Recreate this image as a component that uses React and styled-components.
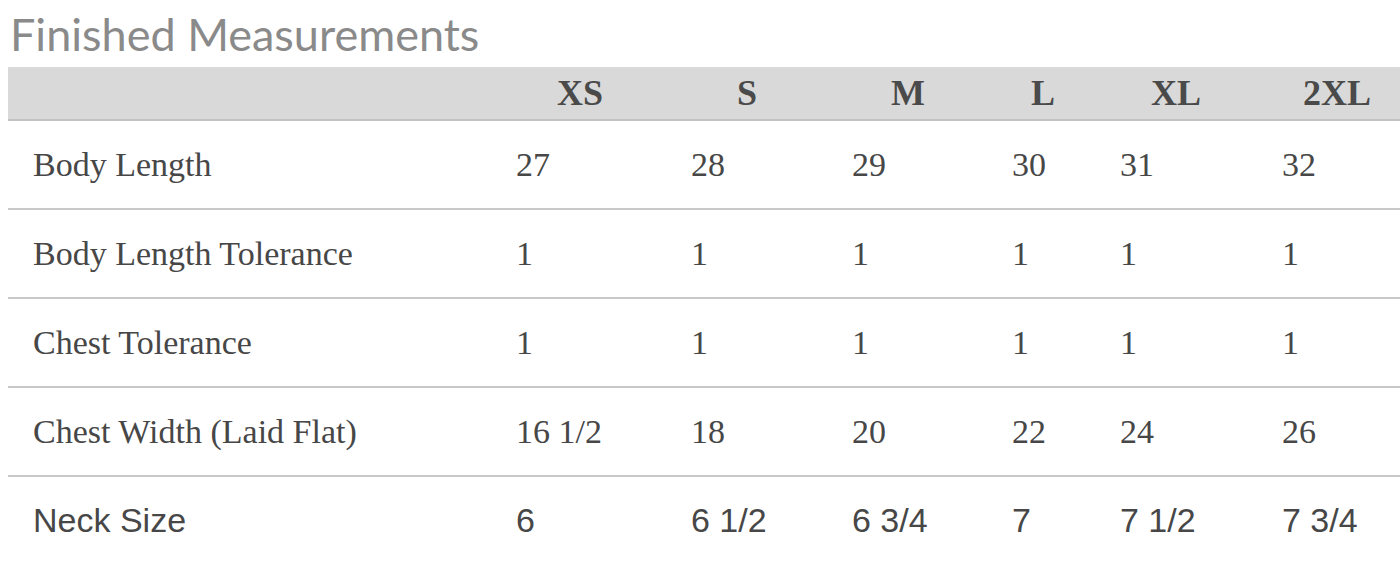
import React from "react";
import styled, { createGlobalStyle } from "styled-components";

const Global = createGlobalStyle`
  html, body { margin: 0; padding: 0; background: #fff; }
  body { overflow: hidden; }
`;

const Page = styled.div`
  padding: 0 0 0 8px;
  width: 1400px;
  box-sizing: border-box;
  overflow: hidden;
`;

const Title = styled.h2`
  margin: 0;
  padding: 12px 0 0 2px;
  height: 67px;
  box-sizing: border-box;
  font-family: Lato, "Open Sans", sans-serif;
  font-weight: 400;
  font-size: 45px;
  line-height: 45px;
  color: #8a8a8a;
`;

const Table = styled.div`
  width: 1392px;
  display: flex;
  flex-direction: column;
`;

const COLS = "508px 175px 161px 160px 108px 162px 118px";

const HeadRow = styled.div`
  display: grid;
  grid-template-columns: ${COLS};
  height: 52px;
  align-items: center;
  background: #d9d9d9;
  border-bottom: 2px solid #c2c2c2;
`;

const HeadCell = styled.div`
  padding-left: ${(p) => p.$indent || 0}px;
  font-family: "Liberation Serif", "Times New Roman", serif;
  font-weight: 700;
  font-size: 36px;
  color: #4a4a4a;
  white-space: nowrap;
`;

const Row = styled.div`
  display: grid;
  grid-template-columns: ${COLS};
  height: 87px;
  align-items: center;
  border-bottom: ${(p) => (p.$last ? "none" : "2px solid #c8c8c8")};
  font-family: ${(p) =>
    p.$sans
      ? '"Liberation Sans", Arial, sans-serif'
      : '"Liberation Serif", "Times New Roman", serif'};
  font-size: 34px;
  color: #474747;
`;

const Label = styled.div`
  padding-left: 25px;
  white-space: nowrap;
`;

const Cell = styled.div`
  white-space: nowrap;
`;

const sizes = [
  { name: "XS", indent: 41 },
  { name: "S", indent: 46 },
  { name: "M", indent: 39 },
  { name: "L", indent: 19 },
  { name: "XL", indent: 31 },
  { name: "2XL", indent: 21 },
];

const rows = [
  { label: "Body Length", values: ["27", "28", "29", "30", "31", "32"] },
  { label: "Body Length Tolerance", values: ["1", "1", "1", "1", "1", "1"] },
  { label: "Chest Tolerance", values: ["1", "1", "1", "1", "1", "1"] },
  {
    label: "Chest Width (Laid Flat)",
    values: ["16 1/2", "18", "20", "22", "24", "26"],
  },
  {
    label: "Neck Size",
    values: ["6", "6 1/2", "6 3/4", "7", "7 1/2", "7 3/4"],
    sans: true,
  },
];

export default function App() {
  return (
    <>
      <Global />
      <Page>
        <Title>Finished Measurements</Title>
        <Table>
          <HeadRow>
            <HeadCell />
            {sizes.map((s) => (
              <HeadCell key={s.name} $indent={s.indent}>
                {s.name}
              </HeadCell>
            ))}
          </HeadRow>
          {rows.map((r, i) => (
            <Row key={r.label} $sans={r.sans} $last={i === rows.length - 1}>
              <Label>{r.label}</Label>
              {r.values.map((v, j) => (
                <Cell key={j}>{v}</Cell>
              ))}
            </Row>
          ))}
        </Table>
      </Page>
    </>
  );
}
